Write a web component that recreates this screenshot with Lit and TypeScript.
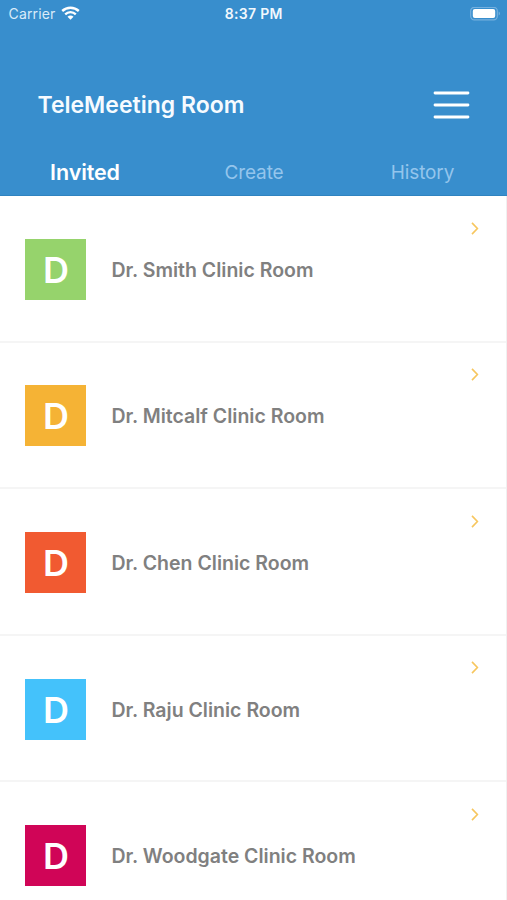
import { LitElement, html, css } from "lit";
import { customElement, property } from "lit/decorators.js";

interface Room {
  name: string;
  color: string;
}

const rooms: Room[] = [
  { name: "Dr. Smith Clinic Room", color: "#96d36c" },
  { name: "Dr. Mitcalf Clinic Room", color: "#f5b335" },
  { name: "Dr. Chen Clinic Room", color: "#f15a31" },
  { name: "Dr. Raju Clinic Room", color: "#44c2fb" },
  { name: "Dr. Woodgate Clinic Room", color: "#d00557" },
];

@customElement("status-bar")
class StatusBar extends LitElement {
  static styles = css`
    :host {
      display: grid;
      grid-template-columns: 1fr auto 1fr;
      align-items: center;
      height: 27px;
      padding: 0 6px 0 8.5px;
      color: #fff;
    }
    .left { display: flex; align-items: center; gap: 5.5px; }
    .carrier { font-size: 14px; letter-spacing: 0.15px; color: #d9ebf9; }
    .time { font-size: 14px; font-weight: 600; letter-spacing: 0.32px; margin-right: 2px; color: #f1f8fd; }
    .battery { justify-self: end; }
    svg { display: block; }
  `;
  render() {
    return html`
      <div class="left">
        <span class="carrier">Carrier</span>
        <svg width="19" height="15" viewBox="0 0 19 15" fill="none" stroke="#fff">
          <path d="M1.2 5C5.9.6 13.1.6 17.8 5" stroke-width="2.4" />
          <path d="M4.2 8.3c3-2.9 7.6-2.9 10.6 0" stroke-width="2.3" />
          <path d="M9.5 13.8 6.5 10.8c1.7-1.6 4.3-1.6 6 0z" fill="#fff" stroke="none" />
        </svg>
      </div>
      <span class="time">8:37 PM</span>
      <svg class="battery" width="31" height="14" viewBox="0 0 31 14">
        <rect x="0.7" y="0.3" width="26.6" height="12.6" rx="3.6" fill="none" stroke="#75b0de" stroke-width="1.2" />
        <rect x="2.8" y="2.1" width="22.4" height="9" rx="2" fill="#fff" />
        <path d="M28.7 4.6c1.7.6 1.7 3.4 0 4z" fill="#75b0de" />
      </svg>
    `;
  }
}

@customElement("room-row")
class RoomRow extends LitElement {
  @property({ attribute: false }) room!: Room;
  static styles = css`
    :host {
      display: grid;
      grid-template-columns: 61px 1fr 8px;
      column-gap: 25px;
      align-items: center;
      box-sizing: border-box;
      height: 146.6px;
      padding: 2px 27px 0 25.4px;
      border-bottom: 2px solid #f5f5f5;
    }
    .avatar {
      display: flex;
      align-items: center;
      justify-content: center;
      box-sizing: border-box;
      height: 61px;
      padding-top: 1px;
      color: #fff;
      font-size: 36px;
      font-weight: 600;
    }
    .name { font-size: 19.5px; font-weight: 600; color: #808080; white-space: nowrap; padding-top: 1px; }
    .chevron { align-self: start; margin-top: 23.6px; display: block; }
  `;
  render() {
    return html`
      <div class="avatar" style="background:${this.room.color}">D</div>
      <div class="name">${this.room.name}</div>
      <svg class="chevron" width="8" height="13" viewBox="0 0 8 13" fill="none" stroke="#f7c65e" stroke-width="1.6">
        <path d="M1 .9 6.4 6.5 1 12.1" />
      </svg>
    `;
  }
}

@customElement("app-root")
class AppRoot extends LitElement {
  static styles = css`
    :host {
      display: block;
      box-sizing: border-box;
      width: 507px;
      height: 900px;
      overflow: hidden;
      background: #fff;
      font-family: Inter, "Liberation Sans", sans-serif;
    }
    .header {
      display: flex;
      flex-direction: column;
      box-sizing: border-box;
      height: 196px;
      background: #388ecd;
      border-bottom: 1px solid #2f83c0;
    }
    .title-bar {
      display: flex;
      align-items: center;
      justify-content: space-between;
      margin-top: 50px;
      height: 56px;
      padding: 0 37px 0 37.5px;
    }
    .title { font-size: 23px; font-weight: 600; color: #f6fbff; white-space: nowrap; }
    .menu { display: block; }
    .tabs {
      display: grid;
      grid-template-columns: 170px 1fr 169px;
      align-items: center;
      justify-items: center;
      margin-top: 24px;
      height: 30px;
    }
    .tab { font-size: 19px; letter-spacing: -0.1px; color: #94c5ec; }
    .active { font-size: 21.5px; font-weight: 600; color: #fff; }
    .rooms { border-right: 1px solid #f0f0f0; height: 704px; overflow: hidden; }
  `;
  render() {
    return html`
      <div class="header">
        <status-bar></status-bar>
        <div class="title-bar">
          <span class="title">TeleMeeting Room</span>
          <svg class="menu" width="37" height="28" viewBox="0 0 37 28" stroke="#fff" stroke-width="2.8" stroke-linecap="round">
            <path d="M2 2h33M2 14h33M2 26h33" />
          </svg>
        </div>
        <div class="tabs">
          <span class="tab active">Invited</span>
          <span class="tab">Create</span>
          <span class="tab">History</span>
        </div>
      </div>
      <div class="rooms">${rooms.map((room) => html`<room-row .room=${room}></room-row>`)}</div>
    `;
  }
}
